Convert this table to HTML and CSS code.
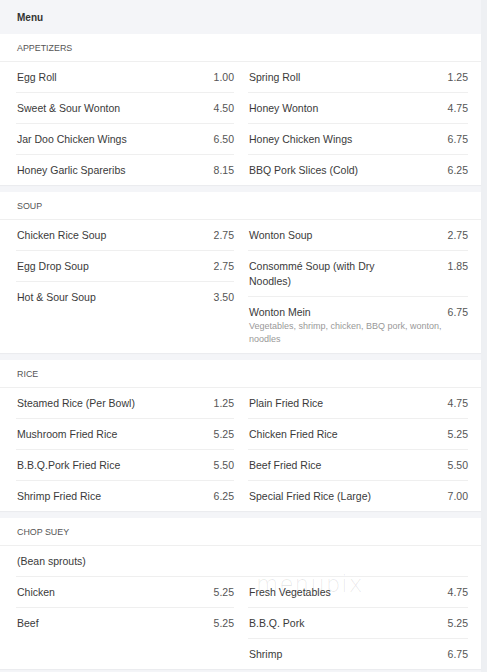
FILE: index.html
```html
<!DOCTYPE html>
<html lang="en">
<head>
<meta charset="utf-8">
<title>Menu</title>
<link rel="stylesheet" href="styles.css">
</head>
<body>
<div class="page">
  <div class="menu-title">Menu</div>

  <section class="card">
    <h2 class="sec-title">Appetizers</h2>
    <div class="cols">
      <ul class="col">
        <li class="item"><div class="row"><span class="name">Egg Roll</span><span class="price">1.00</span></div></li>
        <li class="item"><div class="row"><span class="name">Sweet &amp; Sour Wonton</span><span class="price">4.50</span></div></li>
        <li class="item"><div class="row"><span class="name">Jar Doo Chicken Wings</span><span class="price">6.50</span></div></li>
        <li class="item"><div class="row"><span class="name">Honey Garlic Spareribs</span><span class="price">8.15</span></div></li>
      </ul>
      <ul class="col">
        <li class="item"><div class="row"><span class="name">Spring Roll</span><span class="price">1.25</span></div></li>
        <li class="item"><div class="row"><span class="name">Honey Wonton</span><span class="price">4.75</span></div></li>
        <li class="item"><div class="row"><span class="name">Honey Chicken Wings</span><span class="price">6.75</span></div></li>
        <li class="item"><div class="row"><span class="name">BBQ Pork Slices (Cold)</span><span class="price">6.25</span></div></li>
      </ul>
    </div>
  </section>

  <section class="card">
    <h2 class="sec-title">Soup</h2>
    <div class="cols">
      <ul class="col">
        <li class="item"><div class="row"><span class="name">Chicken Rice Soup</span><span class="price">2.75</span></div></li>
        <li class="item"><div class="row"><span class="name">Egg Drop Soup</span><span class="price">2.75</span></div></li>
        <li class="item"><div class="row"><span class="name">Hot &amp; Sour Soup</span><span class="price">3.50</span></div></li>
      </ul>
      <ul class="col">
        <li class="item"><div class="row"><span class="name">Wonton Soup</span><span class="price">2.75</span></div></li>
        <li class="item"><div class="row"><span class="name">Consommé Soup (with Dry Noodles)</span><span class="price">1.85</span></div></li>
        <li class="item"><div class="row"><span class="name">Wonton Mein</span><span class="price">6.75</span></div>
          <p class="desc">Vegetables, shrimp, chicken, BBQ pork, wonton, noodles</p></li>
      </ul>
    </div>
  </section>

  <section class="card">
    <h2 class="sec-title">Rice</h2>
    <div class="cols">
      <ul class="col">
        <li class="item"><div class="row"><span class="name">Steamed Rice (Per Bowl)</span><span class="price">1.25</span></div></li>
        <li class="item"><div class="row"><span class="name">Mushroom Fried Rice</span><span class="price">5.25</span></div></li>
        <li class="item"><div class="row"><span class="name">B.B.Q.Pork Fried Rice</span><span class="price">5.50</span></div></li>
        <li class="item"><div class="row"><span class="name">Shrimp Fried Rice</span><span class="price">6.25</span></div></li>
      </ul>
      <ul class="col">
        <li class="item"><div class="row"><span class="name">Plain Fried Rice</span><span class="price">4.75</span></div></li>
        <li class="item"><div class="row"><span class="name">Chicken Fried Rice</span><span class="price">5.25</span></div></li>
        <li class="item"><div class="row"><span class="name">Beef Fried Rice</span><span class="price">5.50</span></div></li>
        <li class="item"><div class="row"><span class="name">Special Fried Rice (Large)</span><span class="price">7.00</span></div></li>
      </ul>
    </div>
  </section>

  <section class="card card-last">
    <h2 class="sec-title">Chop Suey</h2>
    <div class="note">(Bean sprouts)</div>
    <div class="cols">
      <ul class="col">
        <li class="item"><div class="row"><span class="name">Chicken</span><span class="price">5.25</span></div></li>
        <li class="item"><div class="row"><span class="name">Beef</span><span class="price">5.25</span></div></li>
      </ul>
      <ul class="col">
        <li class="item"><div class="row"><span class="name">Fresh Vegetables</span><span class="price">4.75</span></div></li>
        <li class="item"><div class="row"><span class="name">B.B.Q. Pork</span><span class="price">5.25</span></div></li>
        <li class="item"><div class="row"><span class="name">Shrimp</span><span class="price">6.75</span></div></li>
      </ul>
    </div>
    <div class="watermark">menupix</div>
  </section>
</div>
</body>
</html>
```

FILE: styles.css
```css
html, body {
  margin: 0;
  padding: 0;
}

body {
  background: #eef0f3;
  font-family: "Liberation Sans", Arial, sans-serif;
  color: #3a3a3a;
}

.page {
  width: 481px;
  background: #f4f5f8;
  min-height: 672px;
}

.menu-title {
  height: 34px;
  box-sizing: border-box;
  padding: 2px 0 0 17px;
  line-height: 32px;
  font-size: 10px;
  font-weight: bold;
  color: #333;
}

.card {
  position: relative;
  background: #fff;
  margin-bottom: 7px;
  box-shadow: 0 1px 1px rgba(0, 0, 0, 0.035);
}

.sec-title {
  margin: 0;
  padding: 2px 0 0 17px;
  line-height: 25px;
  font-size: 8.9px;
  font-weight: normal;
  text-transform: uppercase;
  color: #555;
  border-bottom: 1px solid #efefef;
}

.cols {
  display: grid;
  grid-template-columns: 218px 220px;
  column-gap: 14px;
  padding: 0 13px 0 16px;
}

.col {
  list-style: none;
  margin: 0;
  padding: 0;
}

.item {
  padding: 8px 0 7px 1px;
  border-bottom: 1px solid #efefef;
}

.item:last-child {
  border-bottom: none;
}

.row {
  display: flex;
  justify-content: space-between;
  align-items: flex-start;
  font-size: 10.5px;
  line-height: 15px;
}

.name {
  max-width: 70%;
  color: #3a3a3a;
}

.price {
  flex-shrink: 0;
  color: #555;
}

.desc {
  margin: 0;
  font-size: 9px;
  line-height: 13px;
  color: #999;
}

.note {
  margin: 0 13px 0 16px;
  padding: 8px 0 7px 1px;
  font-size: 10.5px;
  line-height: 15px;
  color: #3a3a3a;
  border-bottom: 1px solid #efefef;
}

.watermark {
  position: absolute;
  left: 256px;
  top: 53px;
  font-size: 23px;
  letter-spacing: 1px;
  color: rgba(0, 0, 0, 0.09);
  font-family: "DejaVu Sans", sans-serif;
  font-weight: 200;
  pointer-events: none;
}
```
